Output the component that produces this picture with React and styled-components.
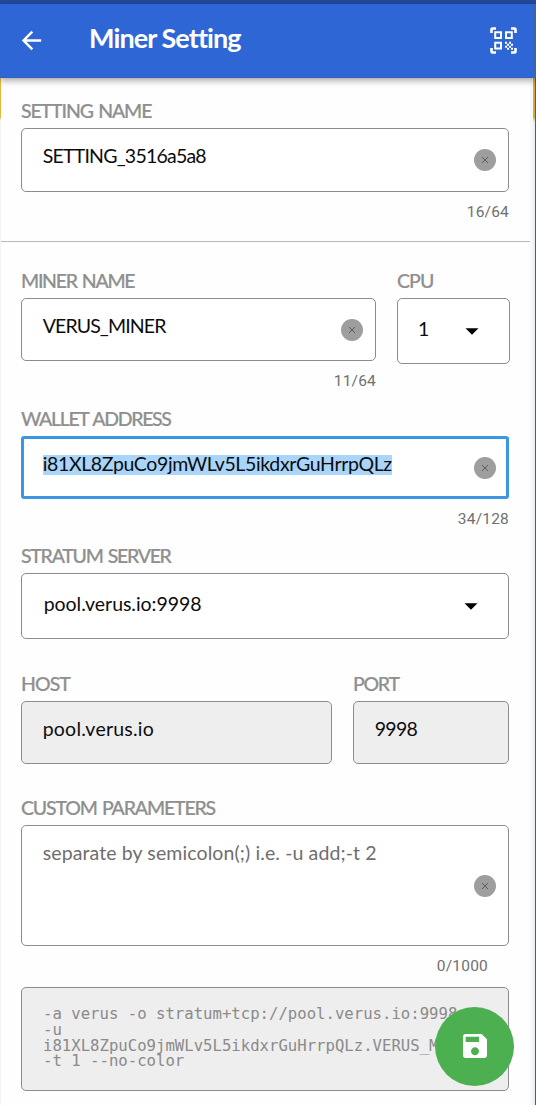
import React from 'react';
import styled, { createGlobalStyle } from 'styled-components';
import { MdArrowBack, MdSave } from 'react-icons/md';

const Global = createGlobalStyle`
  * { box-sizing: border-box; }
  body { margin: 0; background: #fff; font-family: Lato, "Open Sans", sans-serif; }
`;

const Screen = styled.div`
  display: flex;
  flex-direction: column;
  width: 536px;
  height: 1105px;
  overflow: hidden;
  background: #fefefe;
`;

const StatusBar = styled.div`
  flex: none;
  height: 4px;
  background: #234b9f;
`;

const AppBar = styled.header`
  flex: none;
  display: flex;
  align-items: center;
  height: 74px;
  padding: 0 19px 0 17px;
  color: #fff;
  background: linear-gradient(to left, #3e659c 2px, #2f66d6 2px);
  border-bottom: 1px solid #3560b8;
  box-shadow: 0 2px 7px rgba(0, 0, 0, 0.4);
  z-index: 1;
`;

const Title = styled.h1`
  flex: 1;
  margin: 0 0 5px 43px;
  font-size: 27px;
  line-height: 34px;
  font-weight: 700;
  letter-spacing: ${(p) => p.$ls}px;
`;

const Body = styled.div`
  flex: 1;
  display: flex;
  min-height: 0;
`;

const LeftEdge = styled.div`
  width: 1px;
  background: linear-gradient(#e8b63a 39px, #f3f3f3 42px);
`;

const RightEdge = styled.div`
  width: 6px;
  border-right: 1px solid #48606a;
  background: linear-gradient(to left, transparent 2px, #f7f8f8 2px),
    linear-gradient(#d9a82f 39px, #e9f0f2 44px);
`;

const Form = styled.main`
  flex: 1;
  display: flex;
  flex-direction: column;
  min-width: 0;
  padding-top: 21px;
`;

const Section = styled.section`
  display: flex;
  flex-direction: column;
  padding: 0 21px 0 20px;
`;

const Divider = styled.hr`
  width: 100%;
  height: 1px;
  margin: 19px 0 27px;
  border: 0;
  background: #b9b9b9;
`;

const Row = styled.div`
  display: flex;
  gap: 21px;
  margin-right: ${(p) => p.$bleed || 0}px;
`;

const Field = styled.div`
  display: flex;
  flex-direction: column;
  flex: ${(p) => (p.$width ? `0 0 ${p.$width}px` : '1')};
  margin-bottom: ${(p) => p.$after || 0}px;
`;

const Label = styled.label`
  height: 24px;
  margin-bottom: 5px;
  font-size: 19.5px;
  line-height: 24px;
  font-weight: 500;
  -webkit-text-stroke: 0.2px #8f8f8f;
  color: #8f8f8f;
  white-space: nowrap;
  word-spacing: 1.5px;
  letter-spacing: ${(p) => p.$ls || 0}px;
`;

const Box = styled.div`
  display: flex;
  justify-content: space-between;
  align-items: flex-start;
  height: ${(p) => p.$height || 63}px;
  padding: ${(p) => (p.$focused ? '0 10px 0 18px' : '0 12px 0 20px')};
  border: ${(p) => (p.$focused ? '3px solid #3b97e3' : '1px solid #8c8c8c')};
  border-radius: ${(p) => (p.$focused ? 3 : 5)}px;
  background: ${(p) => (p.$disabled ? '#eeeeee' : '#fff')};
`;

const Value = styled.span`
  margin-top: ${(p) => p.$top ?? 16}px;
  margin-left: ${(p) => p.$left ?? 0.7}px;
  font-size: 19.5px;
  line-height: 22px;
  white-space: nowrap;
  color: ${(p) => (p.$muted ? '#6e6e6e' : '#0c0c0c')};
  letter-spacing: ${(p) => p.$ls || 0}px;
`;

const Selected = styled.mark`
  display: block;
  height: 20px;
  line-height: 18px;
  color: inherit;
  background: #a9d5fb;
`;

const ClearButton = styled.button`
  display: flex;
  align-items: center;
  justify-content: center;
  flex: none;
  align-self: center;
  width: 22px;
  height: 22px;
  padding: 0;
  border: 0;
  border-radius: 50%;
  background: #9e9e9e;
`;

const Caret = styled.svg`
  align-self: center;
  width: 14px;
  height: 7px;
  margin-right: ${(p) => p.$right}px;
`;

const Counter = styled.div`
  height: 20px;
  margin: 10px ${(p) => p.$right || 0}px 0 0;
  font-family: Roboto, sans-serif;
  font-size: 15.5px;
  line-height: 20px;
  text-align: right;
  color: #707070;
  letter-spacing: 0.2px;
`;

const CommandBox = styled.pre`
  height: 104px;
  margin: 11px 0 0;
  padding: 18px 0 0 21px;
  border: 1px solid #8c8c8c;
  border-radius: 5px;
  overflow: hidden;
  background: #eeeeee;
  color: #8a8a8a;
  font-family: "DejaVu Sans Mono", monospace;
  font-size: 15.65px;
  line-height: 15.8px;
`;

const SaveButton = styled.button`
  position: absolute;
  left: 435px;
  top: 1007px;
  display: flex;
  align-items: center;
  justify-content: center;
  width: 79px;
  height: 79px;
  padding: 0 0 1px;
  border: 0;
  border-radius: 50%;
  color: #fff;
  background: #4caf50;
  z-index: 2;
`;

const ScanIcon = () => (
  <svg width="27" height="27" viewBox="0 0 27 27" fill="none" stroke="#fff">
    <path
      d="M1.5 6V2.5Q1.5 1.5 2.5 1.5H6M21 1.5H24.5Q25.5 1.5 25.5 2.5V6M25.5 21V24.5Q25.5 25.5 24.5 25.5H21M6 25.5H2.5Q1.5 25.5 1.5 24.5V21"
      strokeWidth="2.6"
    />
    <path
      d="M5.2 5.2H11V11H5.2ZM16 5.2H21.8V11H16ZM5.2 15.8H11V21.6H5.2Z"
      strokeWidth="2"
    />
    <path
      d="M15 14.8h2v2h-2zM19 14.8h2v2h-2zM17 16.8h2v2h-2zM21 16.8h2v2h-2zM15 18.8h2v2h-2zM19 18.8h2v2h-2zM17 20.8h2v2h-2zM21 20.8h2v2h-2z"
      fill="#fff"
      stroke="none"
    />
  </svg>
);

const Clear = () => (
  <ClearButton aria-label="Clear">
    <svg width="8" height="8" viewBox="0 0 8 8">
      <path d="M1 1L7 7M7 1L1 7" stroke="#5c5c5c" strokeWidth="1" fill="none" />
    </svg>
  </ClearButton>
);

const DropDown = ({ right }) => (
  <Caret viewBox="0 0 14 7" $right={right}>
    <path d="M0.5 0.3H13.5L7 6.8Z" fill="#000" />
  </Caret>
);

export default function App() {
  return (
    <Screen>
      <Global />
      <StatusBar />
      <AppBar>
        <MdArrowBack size={29} />
        <Title $ls={-0.9}>Miner Setting</Title>
        <ScanIcon />
      </AppBar>
      <Body>
        <LeftEdge />
        <Form>
          <Section>
            <Field>
              <Label $ls={-1.12}>SETTING NAME</Label>
              <Box $height={64}>
                <Value $ls={-0.78}>SETTING_3516a5a8</Value>
                <Clear />
              </Box>
              <Counter>16/64</Counter>
            </Field>
          </Section>
          <Divider />
          <Section>
            <Row $bleed={-1}>
              <Field $after={16}>
                <Label $ls={-1.3}>MINER NAME</Label>
                <Box>
                  <Value $ls={-0.87}>VERUS_MINER</Value>
                  <Clear />
                </Box>
                <Counter>11/64</Counter>
              </Field>
              <Field $width={113}>
                <Label $ls={-0.9}>CPU</Label>
                <Box $height={66}>
                  <Value $top={19} $left={0}>1</Value>
                  <DropDown right={18} />
                </Box>
              </Field>
            </Row>
            <Field $after={15}>
              <Label $ls={-1.35}>WALLET ADDRESS</Label>
              <Box $focused>
                <Value $ls={-0.36}>
                  <Selected>i81XL8ZpuCo9jmWLv5L5ikdxrGuHrrpQLz</Selected>
                </Value>
                <Clear />
              </Box>
              <Counter>34/128</Counter>
            </Field>
            <Field $after={33}>
              <Label $ls={-1.28}>STRATUM SERVER</Label>
              <Box $height={66}>
                <Value $top={19} $left={1.7} $ls={-0.04}>pool.verus.io:9998</Value>
                <DropDown right={18} />
              </Box>
            </Field>
            <Row>
              <Field $after={32}>
                <Label $ls={-0.95}>HOST</Label>
                <Box $disabled>
                  <Value $ls={0.22}>pool.verus.io</Value>
                </Box>
              </Field>
              <Field $width={156}>
                <Label $ls={-1.3}>PORT</Label>
                <Box $disabled>
                  <Value $ls={-0.7}>9998</Value>
                </Box>
              </Field>
            </Row>
            <Field>
              <Label $ls={-1.18}>CUSTOM PARAMETERS</Label>
              <Box $height={121}>
                <Value $muted $ls={0.11}>separate by semicolon(;) i.e. -u add;-t 2</Value>
                <Clear />
              </Box>
              <Counter $right={21}>0/1000</Counter>
            </Field>
            <CommandBox>
              {'-a verus -o stratum+tcp://pool.verus.io:9998\n-u\ni81XL8ZpuCo9jmWLv5L5ikdxrGuHrrpQLz.VERUS_MINER\n-t 1 --no-color'}
            </CommandBox>
          </Section>
        </Form>
        <RightEdge />
      </Body>
      <SaveButton aria-label="Save">
        <MdSave size={32} />
      </SaveButton>
    </Screen>
  );
}
